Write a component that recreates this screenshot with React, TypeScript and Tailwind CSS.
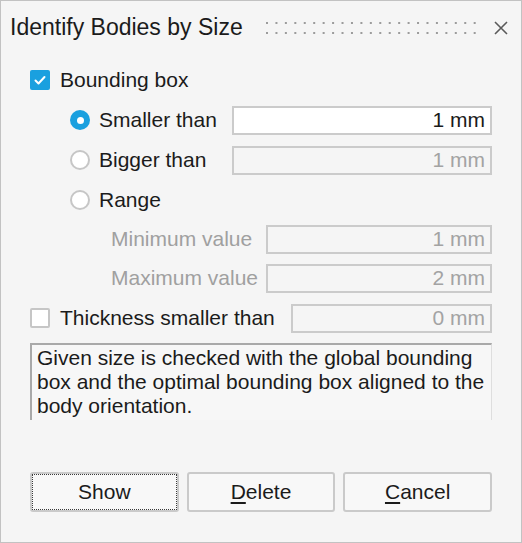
import React from "react";

const font = "font-['Liberation_Sans',Arial,sans-serif]";

function Grip() {
  const cols = Array.from({ length: 23 }, (_, i) => i);
  return (
    <svg width="212" height="14" viewBox="0 0 212 14" className="block">
      {cols.map((i) => (
        <React.Fragment key={i}>
          <rect x={1 + i * 9.44} y={1} width={2} height={2} fill="#9c9c9c" />
          <rect x={1 + i * 9.44} y={11} width={2} height={2} fill="#9c9c9c" />
        </React.Fragment>
      ))}
    </svg>
  );
}

function CloseIcon() {
  return (
    <svg width="14" height="14" viewBox="0 0 14 14" className="block">
      <path d="M1 1 L13 13 M13 1 L1 13" stroke="#5a5a5a" strokeWidth="1.6" fill="none" />
    </svg>
  );
}

function Checkbox({ checked }: { checked: boolean }) {
  if (checked) {
    return (
      <div className="w-[20px] h-[20px] rounded-[2px] bg-[#1aa0df] flex items-center justify-center shrink-0">
        <svg width="20" height="20" viewBox="0 0 20 20" className="block">
          <path d="M5.5 10.5 L8.5 13.5 L14.5 7" stroke="#ffffff" strokeWidth="2" fill="none" strokeLinecap="round" strokeLinejoin="round" />
        </svg>
      </div>
    );
  }
  return <div className="w-[20px] h-[20px] rounded-[2px] bg-white border-2 border-[#c6c6c6] shrink-0" />;
}

function Radio({ checked }: { checked: boolean }) {
  if (checked) {
    return (
      <div className="w-[20px] h-[20px] rounded-full bg-[#1aa0df] flex items-center justify-center shrink-0">
        <div className="w-[7px] h-[7px] rounded-full bg-white" />
      </div>
    );
  }
  return <div className="w-[20px] h-[20px] rounded-full bg-white border-2 border-[#c6c6c6] shrink-0" />;
}

function Field({ value, enabled, width }: { value: string; enabled: boolean; width: string }) {
  return (
    <div
      className={
        "h-[29px] border-2 border-[#cbcbcb] flex items-center justify-end pr-[5px] " +
        width +
        (enabled ? " bg-white text-[#1b1b1b]" : " bg-[#f5f5f5] text-[#a3a3a3]")
      }
    >
      {value}
    </div>
  );
}

function Button({ children, focused }: { children: React.ReactNode; focused?: boolean }) {
  return (
    <div className="relative h-[40px] rounded-[3px] border-2 border-[#cacaca] bg-[#f8f8f8] flex items-center justify-center text-[#1b1b1b]">
      {focused && <div className="absolute inset-0 border border-dotted border-[#3a3a3a]" />}
      {children}
    </div>
  );
}

export default function App() {
  return (
    <div
      className={
        "w-[522px] h-[543px] border border-[#c2c2c2] bg-[#f5f5f5] flex flex-col text-[21px] leading-[1.15] text-[#1b1b1b] " +
        font
      }
    >
      {/* title bar */}
      <div className="h-[53px] flex items-center pl-[9px] pr-[13px] shrink-0">
        <div className="text-[23px] whitespace-nowrap">Identify Bodies by Size</div>
        <div className="ml-[22px]">
          <Grip />
        </div>
        <div className="ml-auto">
          <CloseIcon />
        </div>
      </div>

      {/* options */}
      <div className="flex flex-col pt-[6px] pl-[29px] pr-[29px]">
        <div className="h-[40px] flex items-center gap-[10px]">
          <Checkbox checked />
          <span>Bounding box</span>
        </div>

        <div className="h-[40px] flex items-center pl-[40px]">
          <Radio checked />
          <span className="ml-[9px] w-[133px]">Smaller than</span>
          <Field value="1 mm" enabled width="flex-1" />
        </div>

        <div className="h-[40px] flex items-center pl-[40px]">
          <Radio checked={false} />
          <span className="ml-[9px] w-[133px]">Bigger than</span>
          <Field value="1 mm" enabled={false} width="flex-1" />
        </div>

        <div className="h-[40px] flex items-center pl-[40px]">
          <Radio checked={false} />
          <span className="ml-[9px]">Range</span>
        </div>

        <div className="h-[39px] flex items-center pl-[81px]">
          <span className="w-[155px] text-[#a0a0a0]">Minimum value</span>
          <Field value="1 mm" enabled={false} width="flex-1" />
        </div>

        <div className="h-[39px] flex items-center pl-[81px]">
          <span className="w-[155px] text-[#a0a0a0]">Maximum value</span>
          <Field value="2 mm" enabled={false} width="flex-1" />
        </div>

        <div className="h-[40px] flex items-center">
          <Checkbox checked={false} />
          <span className="ml-[10px] w-[231px]">Thickness smaller than</span>
          <Field value="0 mm" enabled={false} width="flex-1" />
        </div>

        {/* description */}
        <div className="mt-[5px] h-[77px] border-t-2 border-l-2 border-r border-t-[#a9a9a9] border-l-[#a9a9a9] border-r-[#dedede] bg-[#f7f7f7] pl-[5px] pt-[1px] leading-[24px] overflow-hidden">
          Given size is checked with the global bounding box and the optimal bounding box aligned to the body
          orientation.
        </div>

        {/* actions */}
        <div className="mt-[52px] grid grid-cols-3 gap-[8px]">
          <Button focused>Show</Button>
          <Button>
            <span>
              <u className="underline-offset-[3px]">D</u>elete
            </span>
          </Button>
          <Button>
            <span>
              <u className="underline-offset-[3px]">C</u>ancel
            </span>
          </Button>
        </div>
      </div>
    </div>
  );
}
